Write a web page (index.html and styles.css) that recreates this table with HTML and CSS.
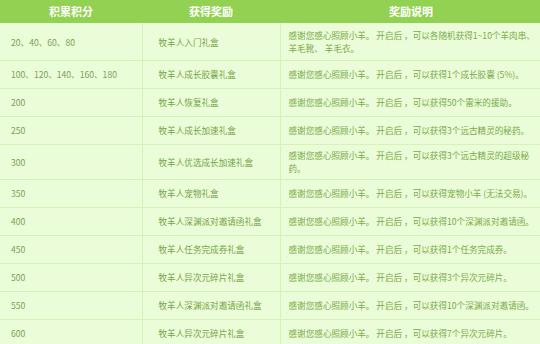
FILE: index.html
```html
<!DOCTYPE html>
<html lang="zh">
<head>
<meta charset="utf-8">
<link rel="stylesheet" href="styles.css">
</head>
<body>
<table class="reward">
  <colgroup>
    <col class="c1"><col class="c2"><col class="c3">
  </colgroup>
  <thead>
    <tr><th>积累积分</th><th>获得奖励</th><th>奖励说明</th></tr>
  </thead>
  <tbody>
    <tr class="tall-a"><td class="pts">20、40、60、80</td><td class="gift">牧羊人入门礼盒</td><td class="desc">感谢您感心照顾小羊。 开启后 ，可以各随机获得1~10个羊肉串、<br>羊毛靴、 羊毛衣。</td></tr>
    <tr><td class="pts">100、120、140、160、180</td><td class="gift">牧羊人成长胶囊礼盒</td><td class="desc">感谢您感心照顾小羊。 开启后 ，可以获得1个成长胶囊 (5%)。</td></tr>
    <tr><td class="pts">200</td><td class="gift">牧羊人恢复礼盒</td><td class="desc">感谢您感心照顾小羊。 开启后 ，可以获得50个雷米的援助。</td></tr>
    <tr><td class="pts">250</td><td class="gift">牧羊人成长加速礼盒</td><td class="desc">感谢您感心照顾小羊。 开启后 ，可以获得3个远古精灵的秘药。</td></tr>
    <tr class="tall-b"><td class="pts">300</td><td class="gift">牧羊人优选成长加速礼盒</td><td class="desc">感谢您感心照顾小羊。 开启后 ，可以获得3个远古精灵的超级秘<br>药。</td></tr>
    <tr><td class="pts">350</td><td class="gift">牧羊人宠物礼盒</td><td class="desc">感谢您感心照顾小羊。 开启后 ，可以获得宠物小羊 (无法交易)。</td></tr>
    <tr><td class="pts">400</td><td class="gift">牧羊人深渊派对邀请函礼盒</td><td class="desc">感谢您感心照顾小羊。 开启后 ，可以获得10个深渊派对邀请函。</td></tr>
    <tr><td class="pts">450</td><td class="gift">牧羊人任务完成券礼盒</td><td class="desc">感谢您感心照顾小羊。 开启后 ，可以获得1个任务完成券。</td></tr>
    <tr><td class="pts">500</td><td class="gift">牧羊人异次元碎片礼盒</td><td class="desc">感谢您感心照顾小羊。 开启后 ，可以获得3个异次元碎片。</td></tr>
    <tr><td class="pts">550</td><td class="gift">牧羊人深渊派对邀请函礼盒</td><td class="desc">感谢您感心照顾小羊。 开启后 ，可以获得10个深渊派对邀请函。</td></tr>
    <tr><td class="pts">600</td><td class="gift">牧羊人异次元碎片礼盒</td><td class="desc">感谢您感心照顾小羊。 开启后 ，可以获得7个异次元碎片。</td></tr>
  </tbody>
</table>
</body>
</html>
```

FILE: styles.css
```css
html, body {
  margin: 0;
  padding: 0;
  background: #eafdd8;
  overflow: hidden;
}

.reward {
  width: 542px;
  table-layout: fixed;
  border-collapse: collapse;
  font-family: "Noto Sans CJK SC", "Noto Sans", sans-serif;
  font-size: 8.6px;
  color: #77a247;
  background: #eafdd8;
}

.c1 { width: 142px; }
.c2 { width: 138px; }
.c3 { width: 262px; }

.reward th {
  background: #93d152;
  color: #ffffff;
  font-size: 11px;
  font-weight: bold;
  height: 23px;
  line-height: 23px;
  padding: 0;
  text-align: center;
  border: none;
}

.reward td {
  border: 1px solid #d5f2b9;
  line-height: 13px;
  padding: 7px 0;
  white-space: nowrap;
  overflow: hidden;
  vertical-align: middle;
}

.reward tr:first-child td { border-top: none; }

.reward td.pts { padding-left: 11px; border-left: none; color: #7c9f55; }
.reward td.gift { padding-left: 16px; }
.reward td.desc { padding-left: 8px; color: #7ca94a; }

.reward tr.tall-a td { padding-top: 6px; padding-bottom: 5px; line-height: 13px; }
.reward tr.tall-b td { padding-top: 4px; padding-bottom: 4px; line-height: 13px; }
```
